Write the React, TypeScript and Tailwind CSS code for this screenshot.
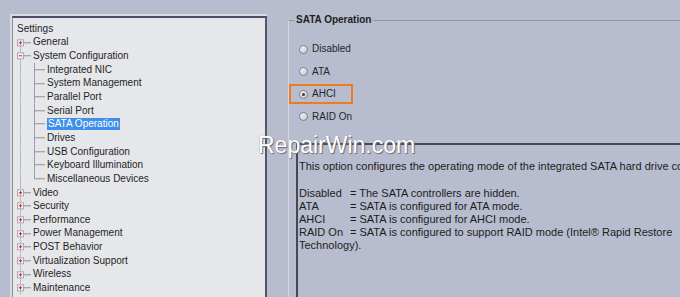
import React from 'react';

type Node = { label: string; level: 0 | 1 | 2; exp?: '+' | '-'; selected?: boolean; last?: boolean; first?: boolean };

const tree: Node[] = [
  { label: 'Settings', level: 0 },
  { label: 'General', level: 1, exp: '+', first: true },
  { label: 'System Configuration', level: 1, exp: '-' },
  { label: 'Integrated NIC', level: 2 },
  { label: 'System Management', level: 2 },
  { label: 'Parallel Port', level: 2 },
  { label: 'Serial Port', level: 2 },
  { label: 'SATA Operation', level: 2, selected: true },
  { label: 'Drives', level: 2 },
  { label: 'USB Configuration', level: 2 },
  { label: 'Keyboard Illumination', level: 2 },
  { label: 'Miscellaneous Devices', level: 2, last: true },
  { label: 'Video', level: 1, exp: '+' },
  { label: 'Security', level: 1, exp: '+' },
  { label: 'Performance', level: 1, exp: '+' },
  { label: 'Power Management', level: 1, exp: '+' },
  { label: 'POST Behavior', level: 1, exp: '+' },
  { label: 'Virtualization Support', level: 1, exp: '+' },
  { label: 'Wireless', level: 1, exp: '+' },
  { label: 'Maintenance', level: 1, exp: '+' },
];

const H = 13.65;
const C = 6.8;
const LINE = '#b9b9bf';

const Gutter = ({ node }: { node: Node }) => {
  if (node.level === 1) {
    return (
      <svg width="20" height={H} viewBox={`0 0 20 ${H}`} className="shrink-0">
        <line x1="7.5" y1={node.first ? C : 0} x2="7.5" y2={H} stroke={LINE} />
        <line x1="11" y1={C} x2="18" y2={C} stroke="#8e8e94" />
        <rect x="4.5" y={C - 3} width="6" height="6" fill="#f4f4f6" stroke="#a9a9b0" />
        <line x1="5.8" y1={C} x2="9.2" y2={C} stroke="#d0202c" />
        {node.exp === '+' && <line x1="7.5" y1={C - 1.7} x2="7.5" y2={C + 1.7} stroke="#d0202c" />}
      </svg>
    );
  }
  return (
    <svg width="34" height={H} viewBox={`0 0 34 ${H}`} className="shrink-0">
      <line x1="7.5" y1="0" x2="7.5" y2={H} stroke={LINE} />
      <line x1="21.5" y1="0" x2="21.5" y2={node.last ? C : H} stroke="#9a9aa0" />
      <line x1="21.5" y1={C} x2="32" y2={C} stroke="#8e8e94" />
    </svg>
  );
};

const TreePanel = () => (
  <div className="ml-[10px] mt-[14px] w-[257px] h-[300px] shrink-0 border-t-2 border-l-2 border-[#d9dbe2]">
    <div className="h-full border-t-2 border-l border-r-2 border-t-[#4d4c68] border-l-[#8c8d96] border-r-[#55566a] bg-[#e6e7ea] pt-[4px] overflow-hidden">
      {tree.map((n) => (
        <div key={n.label} className="flex items-center h-[13.65px] text-[10px] leading-none text-[#1f1f24]">
          {n.level === 0 ? (
            <span className="pl-[4px]">{n.label}</span>
          ) : (
            <>
              <Gutter node={n} />
              {n.selected ? (
                <span className="h-[12px] flex items-center px-px bg-[#3d8fea] text-white">{n.label}</span>
              ) : (
                <span>{n.label}</span>
              )}
            </>
          )}
        </div>
      ))}
    </div>
  </div>
);

const Radio = ({ checked }: { checked?: boolean }) => (
  <div className="w-[9px] h-[9px] shrink-0 rounded-full border border-[#7d8089] bg-gradient-to-br from-[#fbfbfb] to-[#c4c6cc] flex items-center justify-center">
    {checked && <div className="w-[3px] h-[3px] rounded-full bg-[#3a3a40]" />}
  </div>
);

const options = [
  { label: 'Disabled' },
  { label: 'ATA' },
  { label: 'AHCI', checked: true },
  { label: 'RAID On' },
];

const rows: [string, string][] = [
  ['Disabled', '= The SATA controllers are hidden.'],
  ['ATA', '= SATA is configured for ATA mode.'],
  ['AHCI', '= SATA is configured for AHCI mode.'],
  ['RAID On', '= SATA is configured to support RAID mode (Intel® Rapid Restore'],
];

export default function App() {
  return (
    <div
      className="relative w-[680px] h-[297px] overflow-hidden bg-[#b8bccf] flex"
      style={{ fontFamily: '"Liberation Sans", Arial, sans-serif' }}
    >
      <TreePanel />

      <fieldset className="ml-[21px] mt-[14px] w-[440px] shrink-0 border-t border-l border-t-[#8f93a5] border-l-[#d4d6df] border-r-0 border-b-0">
        <legend className="ml-[5px] px-[2px] text-[10px] leading-[12px] font-bold text-[#1f1f24]">SATA Operation</legend>

        <div className="mt-[13px] flex flex-col gap-[2.5px]">
          {options.map((o) => (
            <div
              key={o.label}
              className={`w-[64px] h-[20px] flex items-center gap-[4px] pl-[8px] border-2 whitespace-nowrap ${
                o.checked ? 'border-[#f07a22]' : 'border-transparent'
              }`}
            >
              <Radio checked={o.checked} />
              <span className="text-[10px] leading-none text-[#25252a]">{o.label}</span>
            </div>
          ))}
        </div>

        <div className="ml-[7px] mt-[16.5px] h-[200px] border-t-2 border-l-2 border-[#46485a] pl-px pt-[15px] text-[11px] leading-[13px] text-[#1c1c20] whitespace-nowrap">
          <div>This option configures the operating mode of the integrated SATA hard drive controller.</div>
          <div className="h-[14px]" />
          {rows.map(([k, v]) => (
            <div key={k} className="flex">
              <span className="w-[51px] shrink-0">{k}</span>
              <span>{v}</span>
            </div>
          ))}
          <div>Technology).</div>
        </div>
      </fieldset>

      <div className="absolute left-[258px] top-[134px] text-[23px] leading-none text-white [text-shadow:1px_1px_1px_#6b6d78,0_0_1px_#8a8c96] pointer-events-none">
        RepairWin.com
      </div>
    </div>
  );
}
